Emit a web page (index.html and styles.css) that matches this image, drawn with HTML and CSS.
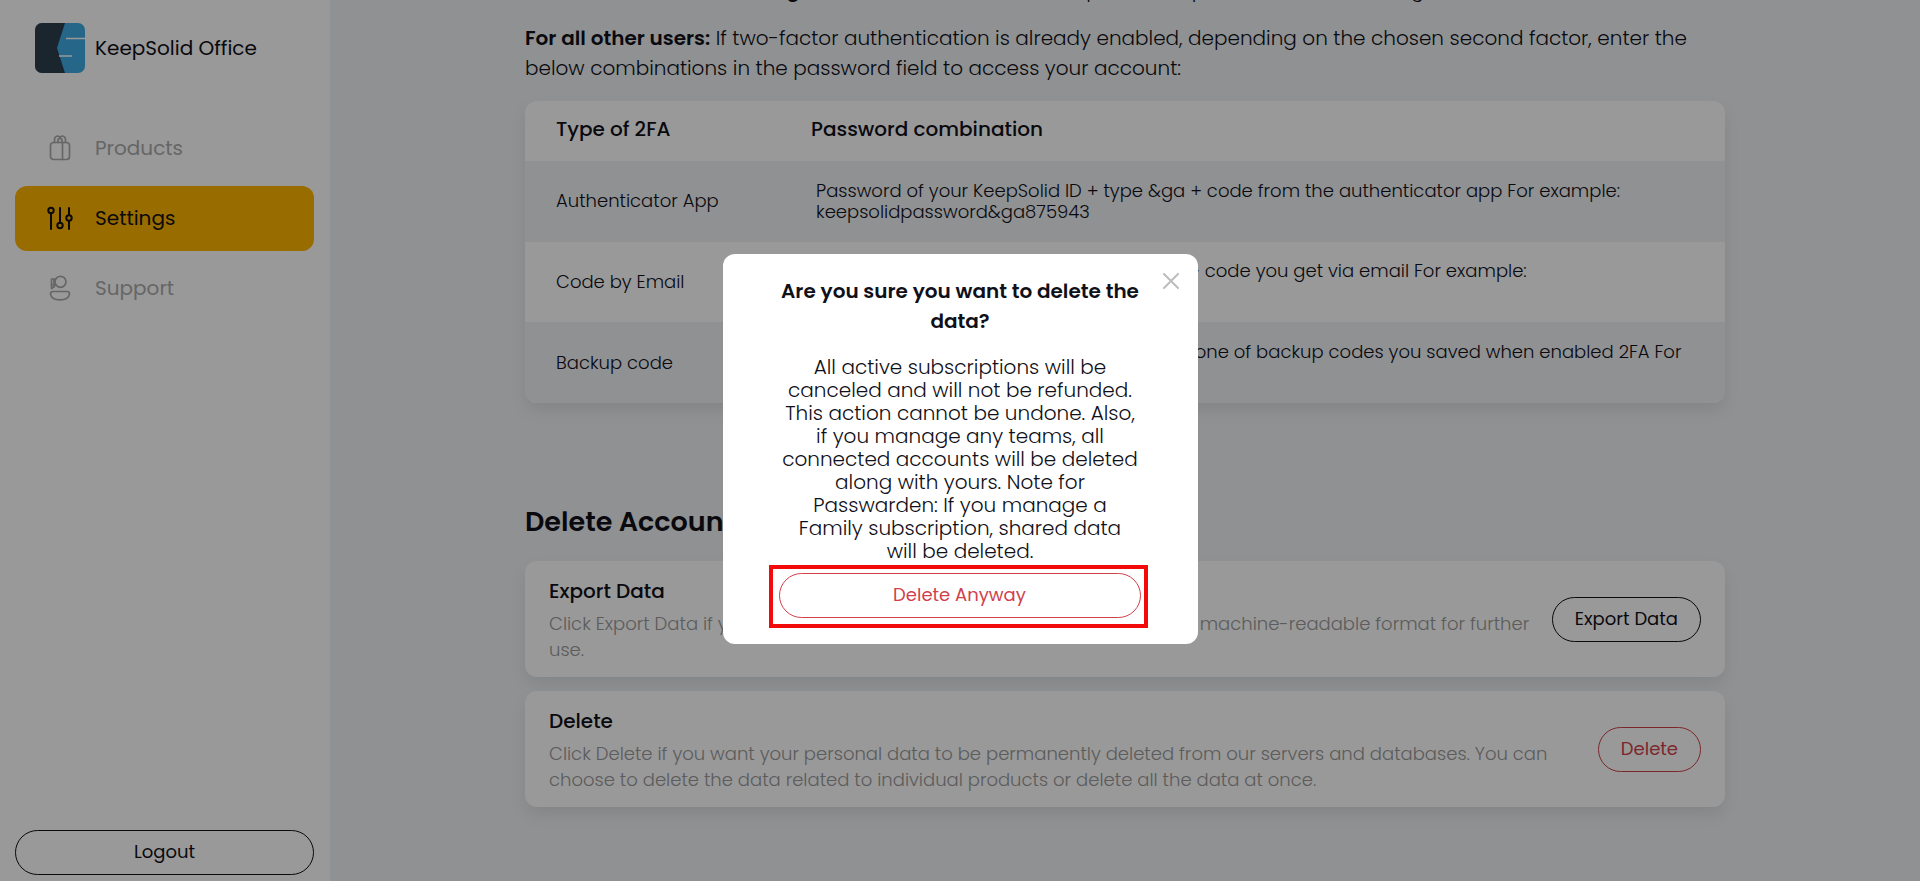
FILE: index.html
```html
<!DOCTYPE html>
<html lang="en">
<head>
  <meta charset="UTF-8">
  <meta name="viewport" content="width=device-width, initial-scale=1.0">
  <title>KeepSolid Office</title>
  <link rel="stylesheet" href="styles.css">
</head>
<body>
  <div class="layout">
    <!-- Sidebar -->
    <aside class="sidebar">
      <a class="brand" href="#">
        <svg class="brand-logo" viewBox="0 0 50 50">
          <rect width="50" height="50" rx="7" fill="#3fabe5"/>
          <path d="M7 0H30L22 25L30 50H7A7 7 0 0 1 0 43V7A7 7 0 0 1 7 0Z" fill="#2c3e4c"/>
          <path d="M31 15.5H50M24 33H37" stroke="#fff" stroke-width="1.4"/>
        </svg>
        <span>KeepSolid Office</span>
      </a>
      <nav class="menu">
        <a class="menu-item" href="#">
          <svg class="menu-icon" viewBox="0 0 26 26">
            <rect x="3.5" y="7.5" width="19" height="17" rx="3"/>
            <path d="M15.5 7.5V24.5M7.5 7.5V4A3 3 0 0 1 13 2.5A3 3 0 0 1 18.5 4V7.5M11 7.5V5.5A2 2 0 0 1 15 5.5V7.5"/>
          </svg>
          <span>Products</span>
        </a>
        <a class="menu-item active" href="#">
          <svg class="menu-icon" viewBox="0 0 26 26">
            <path d="M4 8V24M13 3V18M22 3V10M22 16V24"/>
            <circle cx="4" cy="5.5" r="2.7"/>
            <circle cx="13" cy="20.5" r="2.7"/>
            <circle cx="22" cy="13" r="2.7"/>
          </svg>
          <span>Settings</span>
        </a>
        <a class="menu-item" href="#">
          <svg class="menu-icon" viewBox="0 0 26 26">
            <circle cx="13.5" cy="6.8" r="5.5"/>
            <path d="M8.5 4H4.5V10H9M4.5 10V13.5L7.5 11.5M7 4V10M6 16.5H20A2.5 2.5 0 0 1 22.5 19C22 23 18 24.8 13 24.8S4 23 3.5 19A2.5 2.5 0 0 1 6 16.5Z"/>
          </svg>
          <span>Support</span>
        </a>
      </nav>
      <button class="btn logout" type="button">Logout</button>
    </aside>

    <!-- Settings content, scrolled to the bottom -->
    <main class="content">
      <div class="container">
        <p class="note"><b>For those who are enabling</b> 2FA on the account, the setup will not open without the first login.</p>
        <p class="note"><b>For all other users:</b> If two-factor authentication is already enabled, depending on the chosen second factor, enter the below combinations in the password field to access your account:</p>

        <table class="codes">
          <thead>
            <tr><th>Type of 2FA</th><th>Password combination</th></tr>
          </thead>
          <tbody>
            <tr>
              <td>Authenticator App</td>
              <td>Password of your KeepSolid ID + type &amp;ga + code from the authenticator app For example:<br>keepsolidpassword&amp;ga875943</td>
            </tr>
            <tr>
              <td>Code by Email</td>
              <td>Password of your KeepSolid ID + type &amp;ec + code you get via email For example:<br>keepsolidpassword&amp;ec875943</td>
            </tr>
            <tr>
              <td>Backup code</td>
              <td>Password of your KeepSolid ID + type &amp;b + one of backup codes you saved when enabled 2FA For<br>example: keepsolidpassword&amp;b875943</td>
            </tr>
          </tbody>
        </table>

        <h2 class="section-title">Delete Account</h2>

        <div class="card">
          <div class="card-text">
            <h3>Export Data</h3>
            <p>Click Export Data if you want to receive a copy of your personal data in a machine-readable format for further<br>use.</p>
          </div>
          <button class="btn" type="button">Export Data</button>
        </div>
        <div class="card">
          <div class="card-text">
            <h3>Delete</h3>
            <p>Click Delete if you want your personal data to be permanently deleted from our servers and databases. You can<br>choose to delete the data related to individual products or delete all the data at once.</p>
          </div>
          <button class="btn btn-danger" type="button">Delete</button>
        </div>
      </div>
    </main>
  </div>

  <!-- Confirmation dialog -->
  <div class="overlay">
    <div class="modal" role="dialog" aria-modal="true" aria-labelledby="modal-title">
      <button class="modal-close" type="button" aria-label="Close">
        <svg viewBox="0 0 16 16"><path d="M1 1L15 15M15 1L1 15"/></svg>
      </button>
      <h2 id="modal-title">Are you sure you want to delete the data?</h2>
      <p>All active subscriptions will be<br>canceled and will not be refunded.<br>This action cannot be undone. Also,<br>if you manage any teams, all<br>connected accounts will be deleted<br>along with yours. Note for<br>Passwarden: If you manage a<br>Family subscription, shared data<br>will be deleted.</p>
      <div class="highlight">
        <button class="btn btn-danger" type="button">Delete Anyway</button>
      </div>
    </div>
  </div>
</body>
</html>
```

FILE: styles.css
```css
* {
  box-sizing: border-box;
}

body {
  margin: 0;
  font-family: Poppins, Inter, sans-serif;
  font-size: 18px;
  color: #101018;
  background-color: #eff2f5;
}

h2, h3, p {
  margin: 0;
}

.layout {
  display: flex;
  height: 100vh;
  overflow: hidden;
}

/* Sidebar */
.sidebar {
  display: flex;
  flex-direction: column;
  width: 330px;
  flex-shrink: 0;
  padding: 23px 16px 6px 15px;
  background-color: #fff;
}

.brand {
  display: flex;
  align-items: center;
  gap: 10px;
  padding-left: 20px;
  font-size: 20px;
  color: #101018;
  text-decoration: none;
}

.brand-logo {
  width: 50px;
  height: 50px;
}

.menu {
  display: flex;
  flex-direction: column;
  gap: 5px;
  margin-top: 43px;
}

.menu-item {
  display: flex;
  align-items: center;
  gap: 22px;
  height: 65px;
  padding: 0 0 2px 32px;
  border-radius: 12px;
  font-size: 20px;
  color: #aaa;
  text-decoration: none;
}

.menu-item.active {
  background-color: #ffb400;
  color: #101018;
}

.menu-icon {
  width: 26px;
  height: 26px;
  fill: none;
  stroke: currentColor;
  stroke-width: 1.7;
  stroke-linecap: round;
  stroke-linejoin: round;
}

.active .menu-icon {
  stroke-width: 2;
}

.logout {
  margin-top: auto;
}

/* Buttons */
.btn {
  height: 45px;
  padding: 0 22px 2px;
  border: 1px solid #101018;
  border-radius: 23px;
  background-color: transparent;
  font-family: inherit;
  font-size: 18px;
  color: #101018;
  white-space: nowrap;
  cursor: pointer;
}

.btn-danger {
  border-color: #d1414a;
  color: #d1414a;
}

/* Content */
.content {
  display: flex;
  flex-direction: column;
  justify-content: flex-end;
  flex: 1;
  overflow: hidden;
  padding-bottom: 74px;
}

.container {
  width: 100%;
  max-width: 1200px;
  margin: 0 auto;
}

.note {
  margin-bottom: 18px;
  font-size: 20px;
  font-weight: 300;
  line-height: 30px;
}

.note b {
  font-weight: 600;
}

.codes {
  width: 100%;
  height: 302px;
  border-spacing: 0;
  border-radius: 12px;
  overflow: hidden;
  background-color: #fff;
  box-shadow: 0 8px 16px rgba(0, 0, 0, 0.08);
  text-align: left;
}

.codes th {
  height: 60px;
  padding: 0 0 4px 31px;
  font-size: 20px;
  font-weight: 500;
}

.codes th:first-child {
  width: 255px;
}

.codes td {
  height: 80px;
  padding: 0 0 1px 31px;
  font-weight: 300;
  line-height: 21px;
}

.codes td:last-child {
  padding-left: 36px;
}

.codes tbody tr:nth-child(odd) {
  background-color: #eff2f5;
}

.section-title {
  margin: 99px 0 19px;
  font-size: 27px;
  font-weight: 600;
  line-height: 40px;
}

.card {
  display: flex;
  align-items: center;
  gap: 20px;
  padding: 14px 24px;
  border-radius: 12px;
  background-color: #fff;
  box-shadow: 0 8px 16px rgba(0, 0, 0, 0.08);
}

.card + .card {
  margin-top: 14px;
}

.card-text {
  flex: 1;
}

.card h3 {
  margin-bottom: 4px;
  font-size: 20px;
  font-weight: 500;
  line-height: 32px;
}

.card p {
  font-weight: 300;
  color: #999;
  line-height: 26px;
}

/* Dialog */
.overlay {
  position: fixed;
  inset: 0;
  display: flex;
  justify-content: center;
  align-items: center;
  padding-top: 17px;
  background-color: rgba(0, 0, 0, 0.4);
}

.modal {
  position: relative;
  width: 475px;
  padding: 22px 46px 16px;
  border-radius: 12px;
  background-color: #fff;
  text-align: center;
}

.modal h2 {
  margin-bottom: 20px;
  font-size: 20px;
  font-weight: 600;
  line-height: 30px;
}

.modal p {
  font-size: 20px;
  font-weight: 300;
  line-height: 23px;
}

.modal-close {
  position: absolute;
  top: 19px;
  right: 19px;
  width: 16px;
  height: 16px;
  padding: 0;
  border: none;
  background: none;
  cursor: pointer;
}

.modal-close svg {
  display: block;
  fill: none;
  stroke: #bdbdbd;
  stroke-width: 2;
  stroke-linecap: round;
}

.highlight {
  margin: 2px 4px 0 0;
  padding: 4px 3px 6px 6px;
  border: 4px solid #f30b0b;
}

.highlight .btn {
  width: 100%;
}
```
